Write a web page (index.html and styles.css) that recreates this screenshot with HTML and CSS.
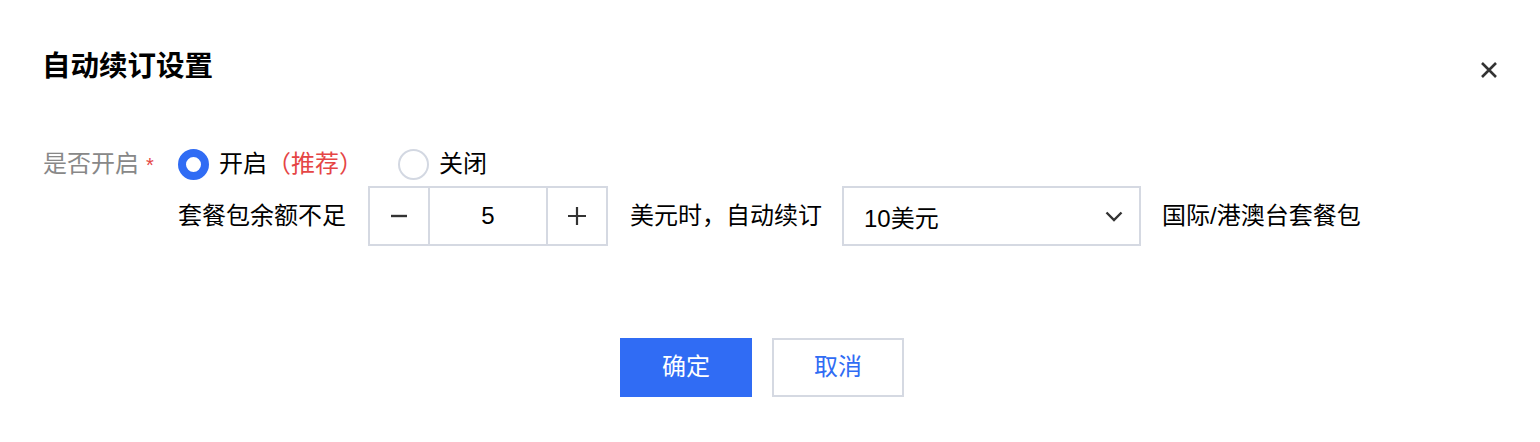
FILE: index.html
```html
<!DOCTYPE html>
<html lang="zh-CN">
<head>
<meta charset="utf-8">
<title>自动续订设置</title>
<link rel="stylesheet" href="styles.css">
</head>
<body>
<div class="dialog">
  <div class="header">
    <h1 class="title">自动续订设置</h1>
    <button class="close" aria-label="关闭">
      <svg width="18" height="18" viewBox="0 0 18 18"><path d="M2 2 L16 16 M16 2 L2 16" stroke="#333" stroke-width="2.6" stroke-linecap="butt"/></svg>
    </button>
  </div>
  <div class="form">
    <div class="label">是否开启<span class="star">*</span></div>
    <div class="controls">
      <div class="radios">
        <label class="radio checked"><span class="dot"></span><span class="rtext">开启<span class="rec">（推荐）</span></span></label>
        <label class="radio"><span class="dot"></span><span class="rtext">关闭</span></label>
      </div>
      <div class="line">
        <span class="txt">套餐包余额不足</span>
        <div class="stepper">
          <span class="sbtn"><svg width="16" height="16" viewBox="0 0 16 16"><path d="M0 8 H16" stroke="#333" stroke-width="2.4"/></svg></span>
          <span class="sval">5</span>
          <span class="sbtn"><svg width="18" height="18" viewBox="0 0 18 18"><path d="M0 9 H18 M9 0 V18" stroke="#333" stroke-width="2.2"/></svg></span>
        </div>
        <span class="txt tight">美元时，自动续订</span>
        <div class="select">
          <span class="sel-text">10美元</span>
          <svg width="18" height="11" viewBox="0 0 18 11"><path d="M1.5 1.5 L9 9 L16.5 1.5" stroke="#333" stroke-width="2.4" fill="none"/></svg>
        </div>
        <span class="txt after">国际/港澳台套餐包</span>
      </div>
    </div>
  </div>
  <div class="footer">
    <button class="btn primary">确定</button>
    <button class="btn">取消</button>
  </div>
</div>
</body>
</html>
```
FILE: styles.css
```css
* { box-sizing: border-box; }
html, body { margin: 0; padding: 0; background: #fff; }
body {
  font-family: "Liberation Sans", "Noto Sans CJK SC", sans-serif;
  color: #000;
  width: 1540px;
  height: 442px;
  overflow: hidden;
}
.dialog { padding: 0 42px 0 43px; }
.header {
  display: flex;
  align-items: center;
  justify-content: space-between;
  padding-top: 46px;
  height: 86px;
}
.title {
  margin: 0 0 0 -1px;
  font-size: 28.5px;
  line-height: 40px;
  font-weight: bold;
  color: #000;
}
.close {
  border: 0;
  background: none;
  padding: 0;
  width: 18px;
  height: 18px;
  display: flex;
  margin-top: 8px;
}
.form {
  display: flex;
  margin-top: 58px;
  font-size: 24px;
}
.label {
  width: 135px;
  height: 40px;
  line-height: 40px;
  color: #888;
  flex: none;
}
.star { color: #e54545; margin-left: 7px; font-size: 20px; }
.controls { display: flex; flex-direction: column; gap: 2px; }
.radios { display: flex; height: 40px; align-items: center; gap: 35px; }
.radio { display: flex; align-items: center; gap: 10px; line-height: 40px; color: #000; }
.dot {
  width: 31px;
  height: 31px;
  border-radius: 50%;
  border: 2px solid #d3d8e2;
  flex: none;
}
.radio.checked .dot { border: 8px solid #306cf4; }
.rec { color: #e54545; }
.line { display: flex; align-items: center; gap: 22px; height: 60px; }
.line > * { flex: none; }
.txt { line-height: 40px; white-space: nowrap; }
.tight { margin-right: -2px; }
.after { margin-left: -1px; }
.stepper {
  display: flex;
  width: 240px;
  height: 60px;
  border: 2px solid #d5d9e2;
}
.sbtn {
  width: 58px;
  display: flex;
  align-items: center;
  justify-content: center;
}
.sbtn:first-child { border-right: 2px solid #d5d9e2; width: 60px; }
.sbtn:last-child { border-left: 2px solid #d5d9e2; width: 60px; }
.sval {
  flex: 1;
  display: flex;
  align-items: center;
  justify-content: center;
  font-size: 24px;
}
.select {
  width: 299px;
  height: 60px;
  border: 2px solid #d5d9e2;
  display: flex;
  align-items: center;
  justify-content: space-between;
  padding: 0 16px 0 20px;
}
.sel-text { font-size: 24px; }
.footer {
  display: flex;
  justify-content: center;
  gap: 20px;
  margin-top: 92px;
  padding-right: 17px;
}
.btn {
  width: 132px;
  height: 59px;
  font-family: "Liberation Sans", "Noto Sans CJK SC", sans-serif;
  font-size: 24px;
  line-height: 1;
  border: 2px solid #d5d9e2;
  background: #fff;
  color: #306cf4;
  padding: 0 0 1px;
}
.btn.primary { background: #306cf4; border-color: #306cf4; color: #fff; }
```
